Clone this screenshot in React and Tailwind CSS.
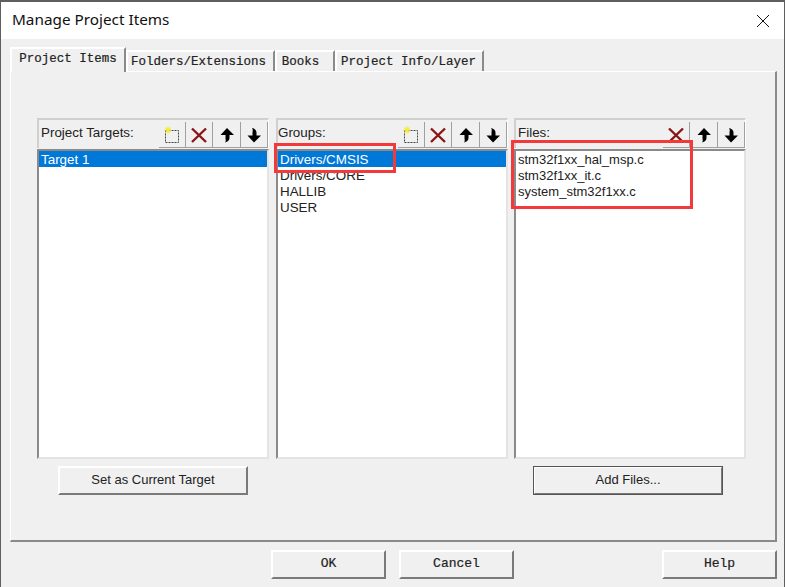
import React from "react";

const mono = "font-['Liberation_Mono',monospace]";
const sans = "font-['Liberation_Sans',Arial,sans-serif]";

function NewIcon() {
  return (
    <svg width="20" height="20" viewBox="0 0 20 20">
      <rect x="3.5" y="5.5" width="13" height="12" fill="none" stroke="#444" strokeWidth="1" strokeDasharray="2 1" />
      <path d="M6 1.5v7M2.5 5h7M3.5 2.5l5 5M8.5 2.5l-5 5" stroke="#f4ec3c" strokeWidth="1.2" />
    </svg>
  );
}
function DelIcon() {
  return (
    <svg width="18" height="18" viewBox="0 0 18 18">
      <path d="M2 2.5 16 16M16 2.5 2 16" stroke="#8b1414" strokeWidth="2.4" />
    </svg>
  );
}
function UpIcon() {
  return (
    <svg width="16" height="16" viewBox="0 0 16 16">
      <path d="M8 1 15 8H10.5V11C10.5 13 9 15 6 15.5C7.3 14 6.5 12.5 6.5 11V8H1.5Z" fill="#000" />
    </svg>
  );
}
function DownIcon() {
  return (
    <svg width="16" height="16" viewBox="0 0 16 16">
      <path d="M8 15.5 15 8.5H10.5V5.5C10.5 3.5 9 1.5 6 1C7.3 2.5 6.5 4 6.5 5.5V8.5H1.5Z" fill="#000" />
    </svg>
  );
}

function ToolBtn({ children, w = "w-[27px]" }) {
  return (
    <div className={`${w} h-[26px] flex items-center justify-center border-r border-b border-[#a0a0a0]`}>
      {children}
    </div>
  );
}

function Column({ title, titleClass = "pl-[2px]", showNew = true, items, selected, size = "text-[13.4px]", className = "", children }) {
  return (
    <div className={`w-[232px] flex flex-col ${className}`}>
      <div className="h-[30px] border-t-2 border-l-2 border-r border-t-[#d0d0d0] border-l-[#d0d0d0] border-r-white flex items-center justify-between">
        <span className={`${sans} text-[13.4px] text-[#222] pb-[1px] ${titleClass}`}>{title}</span>
        <div className="flex self-end">
          {showNew && <ToolBtn><NewIcon /></ToolBtn>}
          <ToolBtn><DelIcon /></ToolBtn>
          <ToolBtn w="w-[28px]"><UpIcon /></ToolBtn>
          <ToolBtn w="w-[27px]"><DownIcon /></ToolBtn>
        </div>
      </div>
      <div className="mt-[1px] h-[310px] bg-white border-t-2 border-l-2 border-t-[#8a8a8a] border-l-[#8a8a8a] border-r-2 border-b-2 border-r-[#e4e4e4] border-b-[#e4e4e4]">
        {items.map((t, i) => (
          <div
            key={t}
            className={`${sans} h-[16px] leading-[18px] ${size} pl-[2px] ${
              i === selected ? "bg-[#0078d7] text-white" : "text-[#222]"
            }`}
          >
            {t}
          </div>
        ))}
      </div>
      {children}
    </div>
  );
}

function RaisedBtn({ children, className = "", font = sans, size = "text-[13px]" }) {
  return (
    <div
      className={`${font} ${size} h-[29px] pb-[2px] flex items-center justify-center text-[#222] bg-[#f0f0f0] border-t-2 border-l-2 border-t-white border-l-white border-r-2 border-b-2 border-r-[#7a7a7a] border-b-[#7a7a7a] ${className}`}
    >
      {children}
    </div>
  );
}

function Tab({ label, active, w, extra = "" }) {
  return (
    <div
      className={`${mono} ${w} text-[12.5px] [-webkit-text-stroke:0.2px_#222] text-[#222] flex items-center justify-center bg-[#f0f0f0] border-t-2 border-l-2 border-t-white border-l-white border-r-2 border-r-[#8a8a8a] ${extra} ${
        active ? "h-[25px] -mb-[1px] relative z-10 pb-[3px]" : "h-[21px] self-end pt-[1px]"
      }`}
    >
      {label}
    </div>
  );
}

export default function App() {
  return (
    <div className="relative w-[785px] h-[587px] overflow-hidden bg-[#f0f0f0] border-t-2 border-l border-r border-[#5f5f5f] box-border">
      <div className="h-[37px] bg-white flex items-center justify-between pl-[11px] pr-[14px] pb-[2px]">
        <span className="font-['Noto_Sans',sans-serif] text-[15.3px] text-[#111]">Manage Project Items</span>
        <svg width="14" height="14" viewBox="0 0 14 14" className="mt-[2px]">
          <path d="M1 1 13 13M13 1 1 13" stroke="#111" strokeWidth="1" />
        </svg>
      </div>

      <div className="pt-[8px] pl-[9px]">
        <div className="flex h-[24px] items-end">
          <Tab label="Project Items" active w="w-[116px]" />
          <Tab label="Folders/Extensions" w="w-[149px]" extra="pr-[4px]" />
          <Tab label="Books" w="w-[60px]" extra="pr-[9px]" />
          <Tab label="Project Info/Layer" w="w-[149px]" extra="pr-[2px]" />
        </div>

        <div className="w-[767px] h-[471px] border-t border-l border-white border-r-2 border-b-2 border-r-[#8a8a8a] border-b-[#8a8a8a] pt-[46px] pl-[26px]">
          <div className="flex gap-[7px]">
            <Column title="Project Targets:" items={["Target 1"]} selected={0}>
              <RaisedBtn className="w-[190px] ml-[21px] mt-[7px]">Set as Current Target</RaisedBtn>
            </Column>
            <Column title="Groups:" titleClass="pl-0" items={["Drivers/CMSIS", "Drivers/CORE", "HALLIB", "USER"]} selected={0} />
            <Column title="Files:" showNew={false} size="text-[13px]" className="-ml-[1px]" items={["stm32f1xx_hal_msp.c", "stm32f1xx_it.c", "system_stm32f1xx.c"]} selected={-1}>
              <RaisedBtn className="w-[190px] ml-[19px] mt-[7px] outline outline-1 outline-[#555] -outline-offset-1">Add Files...</RaisedBtn>
            </Column>
          </div>
        </div>

        <div className="flex mt-[8px] pl-[261px]">
          <RaisedBtn font={mono} size="text-[13px] [-webkit-text-stroke:0.2px_#222]" className="w-[115px]">OK</RaisedBtn>
          <RaisedBtn font={mono} size="text-[13px] [-webkit-text-stroke:0.2px_#222]" className="w-[115px] ml-[13px]">Cancel</RaisedBtn>
          <RaisedBtn font={mono} size="text-[13px] [-webkit-text-stroke:0.2px_#222]" className="w-[115px] ml-[148px]">Help</RaisedBtn>
        </div>
      </div>

      {/* red annotation rectangles */}
      <div className="absolute left-[273px] top-[141px] w-[122px] h-[30px] border-[3px] border-[#f23a3a]" />
      <div className="absolute left-[510px] top-[138px] w-[182px] h-[69px] border-[3px] border-[#f23a3a]" />
    </div>
  );
}
